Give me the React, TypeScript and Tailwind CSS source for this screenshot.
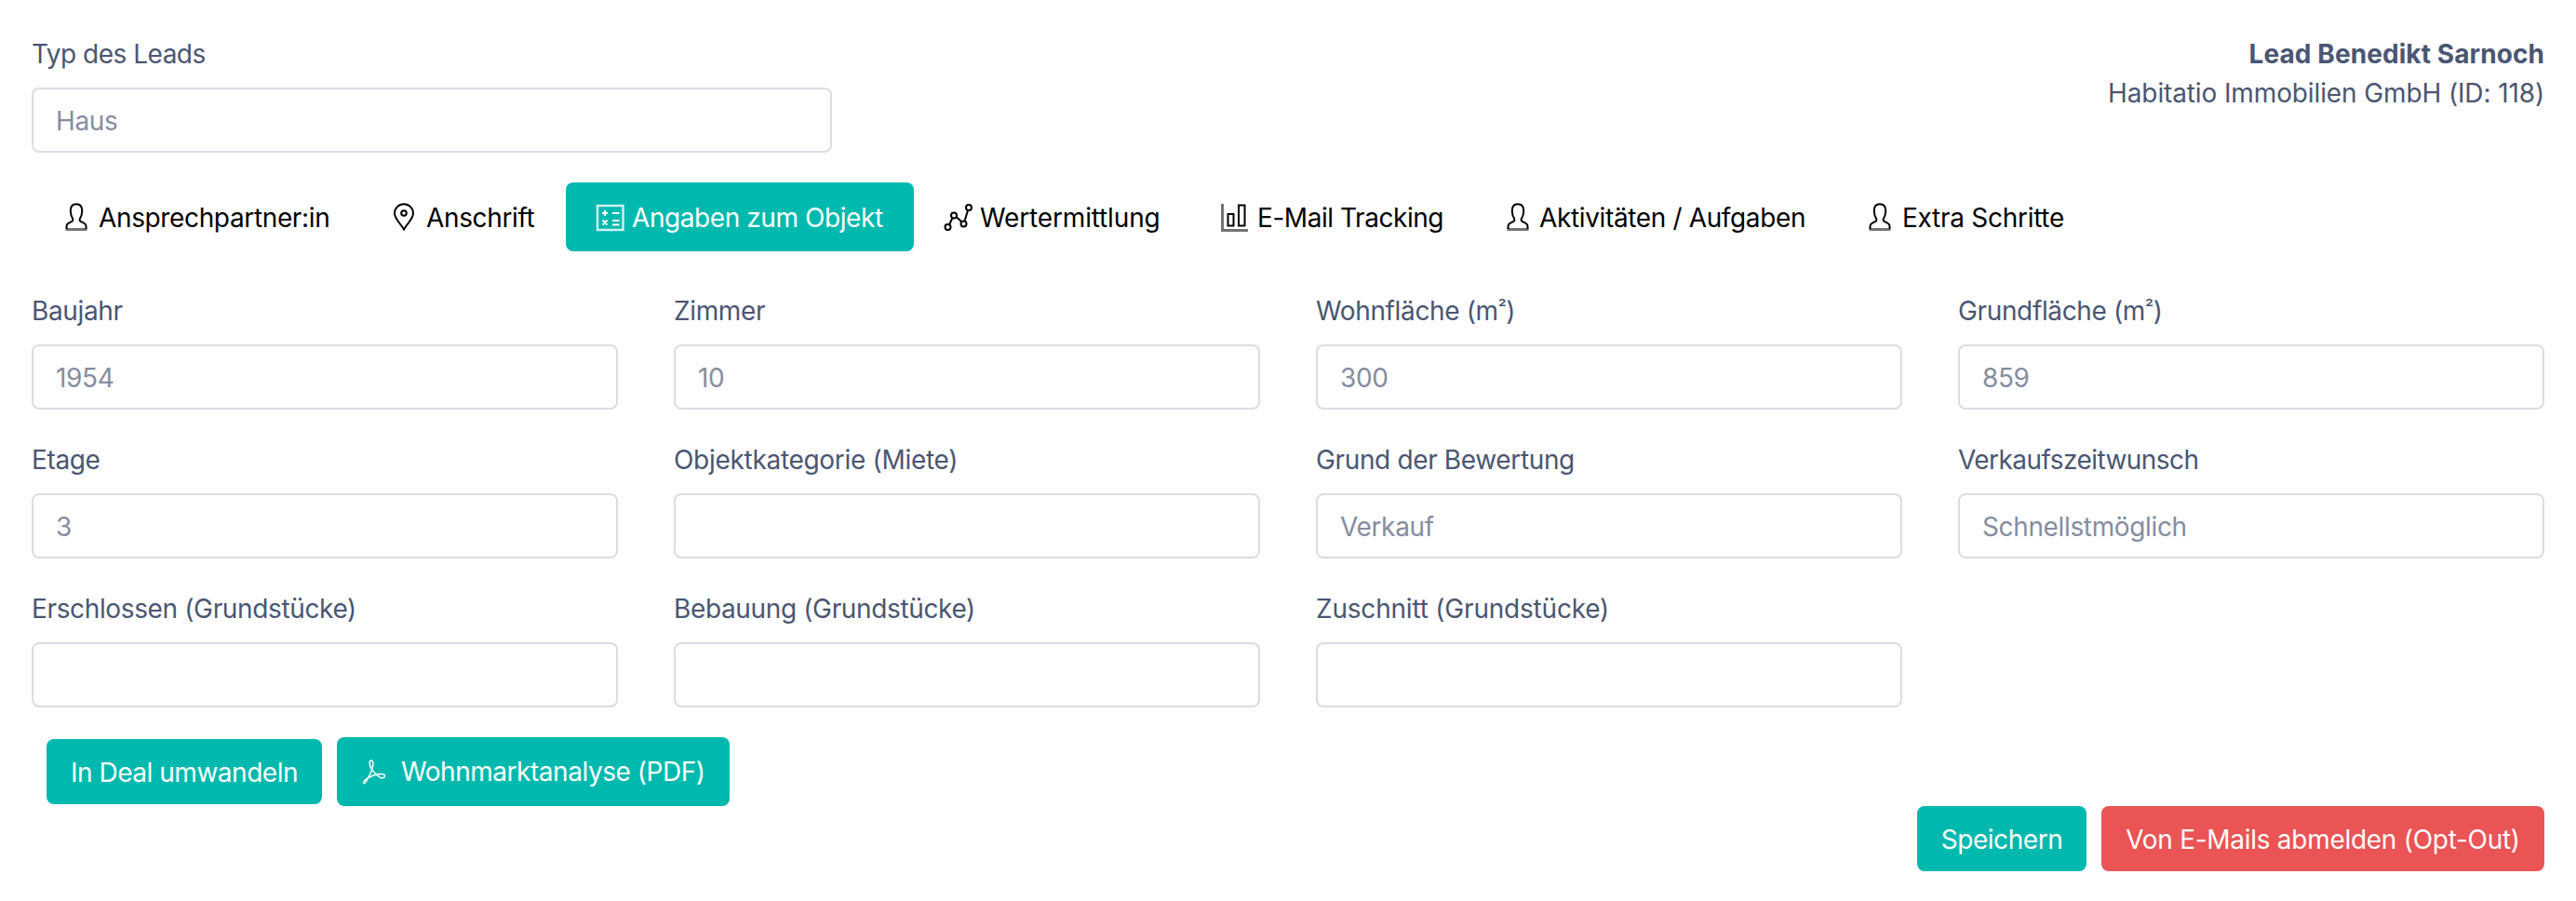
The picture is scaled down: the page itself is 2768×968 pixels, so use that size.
import type { ReactNode } from 'react';

interface Field {
  label: string;
  value: string;
  squared?: boolean;
  tracking?: string;
}

interface Tab {
  label: string;
  icon: ReactNode;
  width: string;
  tracking?: string;
  active?: boolean;
}

const fields: Field[] = [
  { label: 'Baujahr', value: '1954' },
  { label: 'Zimmer', value: '10' },
  { label: 'Wohnfläche', value: '300', squared: true },
  { label: 'Grundfläche', value: '859', squared: true },
  { label: 'Etage', value: '3' },
  { label: 'Objektkategorie (Miete)', value: '', tracking: 'tracking-[-0.3px]' },
  { label: 'Grund der Bewertung', value: 'Verkauf' },
  { label: 'Verkaufszeitwunsch', value: 'Schnellstmöglich', tracking: 'tracking-[-0.55px]' },
  { label: 'Erschlossen (Grundstücke)', value: '' },
  { label: 'Bebauung (Grundstücke)', value: '' },
  { label: 'Zuschnitt (Grundstücke)', value: '', tracking: 'tracking-[-0.2px]' },
];

const Icon = ({ children, size = 'size-8' }: { children: ReactNode; size?: string }) => (
  <svg
    viewBox="0 0 32 32"
    fill="none"
    stroke="currentColor"
    strokeWidth="2"
    className={`shrink-0 ${size}`}
  >
    {children}
  </svg>
);

const UserIcon = () => (
  <Icon>
    <path d="M5.500 29v-3c0-1.500.8-2.600 2-3.200l3.300-1.600c1.600-.8 2-2 1.200-3.400C10.500 15.300 9.800 13 9.800 9.500c0-4.500 2.400-7.300 6.200-7.300s6.200 2.800 6.200 7.300c0 3.500-.7 5.800-2.200 8.300-.8 1.400-.4 2.600 1.200 3.400l3.300 1.600c1.200.6 2 1.700 2 3.200v3" />
    <path d="M4.500 29.500h23" strokeWidth="3" className="opacity-55" />
  </Icon>
);

const PinIcon = () => (
  <Icon>
    <path d="M16 29.500C12 22.500 6 18 6 12.200a10 10 0 0 1 20 0C26 18 20 22.500 16 29.500z" />
    <circle cx="16" cy="12" r="2.800" />
  </Icon>
);

const CalcIcon = () => (
  <Icon>
    <path d="M2 4h27.500v26H2z" strokeWidth="2.500" className="opacity-80" />
    <path d="M7 12h6M10 9v6M18 12h7.500M18 20h7.500M18 24.500h7.500M7.500 19.500l5 5M12.500 19.500l-5 5" />
  </Icon>
);

const GraphIcon = () => (
  <Icon>
    <circle cx="4.500" cy="27" r="3" />
    <circle cx="11" cy="14.500" r="3" />
    <circle cx="21.500" cy="23.500" r="3" />
    <circle cx="27" cy="6" r="3" />
    <path d="M6 24.500 9.500 17M13.500 16l6 5.500M22.500 20.500l3.500-11.500" />
  </Icon>
);

const BarsIcon = () => (
  <Icon>
    <path d="M2.500 2v28.500h27.500" strokeWidth="3" className="opacity-55" />
    <path d="M8.500 13h6v12.500h-6zM20 3.500h6.500v22H20z" />
  </Icon>
);

const PdfIcon = () => (
  <Icon size="size-7">
    <path
      strokeWidth="1.700"
      d="M3.500 30.500c-2-1 .5-4 5-6.500 4-7 7-14 6-19-.4-3.500-4-3.500-4 0 0 6 6 14 12.500 18 3.500 2 7 0 6-2.500-1.500-3-13-1.500-20.500 3.500-2 4-4 7-5 6.500z"
    />
  </Icon>
);

const tabs: Tab[] = [
  { label: 'Ansprechpartner:in', icon: <UserIcon />, width: 'w-[352px]' },
  { label: 'Anschrift', icon: <PinIcon />, width: 'w-[222px]' },
  {
    label: 'Angaben zum Objekt',
    icon: <CalcIcon />,
    width: 'w-[374px]',
    tracking: '-ml-px tracking-[-0.42px]',
    active: true,
  },
  {
    label: 'Wertermittlung',
    icon: <GraphIcon />,
    width: 'w-[297px]',
    tracking: '-ml-px tracking-[-0.15px]',
  },
  {
    label: 'E-Mail Tracking',
    icon: <BarsIcon />,
    width: 'w-[304px]',
    tracking: 'tracking-[-0.45px]',
  },
  {
    label: 'Aktivitäten / Aufgaben',
    icon: <UserIcon />,
    width: 'w-[389px]',
    tracking: '-ml-px',
  },
  {
    label: 'Extra Schritte',
    icon: <UserIcon />,
    width: 'w-[280px]',
    tracking: 'tracking-[-0.28px]',
  },
];

const TextField = ({ label, value, squared, tracking = '' }: Field) => (
  <label className="flex flex-col gap-[15px]">
    <span className={`h-[42px] leading-[42px] ${tracking}`}>
      {label}
      {squared && (
        <>
          {' (m'}
          <span className="align-[6px] text-[20px] leading-none font-medium">²</span>)
        </>
      )}
    </span>
    <input
      readOnly
      value={value}
      className="h-[70px] w-full rounded-lg border-2 border-[#dadde4] bg-white px-6 pt-0.5 text-[#858d9f] outline-none"
    />
  </label>
);

const App = () => {
  return (
    <main className="h-[968px] w-full bg-white px-[34px] pt-[37px] font-['Inter',sans-serif] text-[28px] leading-[42px] tracking-[-0.36px] text-[#4a5672]">
      <header className="flex items-start justify-between">
        <div className="w-[860px]">
          <TextField label="Typ des Leads" value="Haus" tracking="tracking-[-0.5px]" />
        </div>
        <div className="text-right">
          <p className="font-bold tracking-[0.08px]">Lead Benedikt Sarnoch</p>
          <p className="tracking-[-0.12px]">Habitatio Immobilien GmbH (ID: 118)</p>
        </div>
      </header>

      <nav className="mt-8 flex">
        {tabs.map((tab) => (
          <button
            key={tab.label}
            className={`flex h-[74px] shrink-0 items-center gap-2 rounded-lg pl-8 whitespace-nowrap ${tab.width} ${
              tab.active ? 'bg-[#00b9ae] text-white' : 'text-black'
            }`}
          >
            {tab.icon}
            <span className={`pt-0.5 ${tab.tracking ?? ''}`}>{tab.label}</span>
          </button>
        ))}
      </nav>

      <section className="mt-[43px] grid grid-cols-4 gap-x-[60px] gap-y-[33px]">
        {fields.map((field) => (
          <TextField key={field.label} {...field} />
        ))}
      </section>

      <div className="mt-8 flex items-center gap-4 pl-4 text-white">
        <button className="h-[70px] w-[296px] rounded-lg bg-[#00b9ae] pt-0.5 tracking-[-0.48px]">
          In Deal umwandeln
        </button>
        <button className="flex h-[74px] w-[422px] items-center gap-4 rounded-lg bg-[#00b9ae] pl-[26px] tracking-[-0.46px] whitespace-nowrap">
          <PdfIcon />
          <span className="-ml-px">Wohnmarktanalyse (PDF)</span>
        </button>
      </div>

      <footer className="flex justify-end gap-4 text-white">
        <button className="h-[70px] w-[182px] rounded-lg bg-[#00b9ae] pt-0.5 tracking-[-0.45px]">
          Speichern
        </button>
        <button className="h-[70px] w-[476px] rounded-lg bg-[#ea5455] pt-0.5 tracking-[-0.28px]">
          Von E-Mails abmelden (Opt-Out)
        </button>
      </footer>
    </main>
  );
};

export default App;
